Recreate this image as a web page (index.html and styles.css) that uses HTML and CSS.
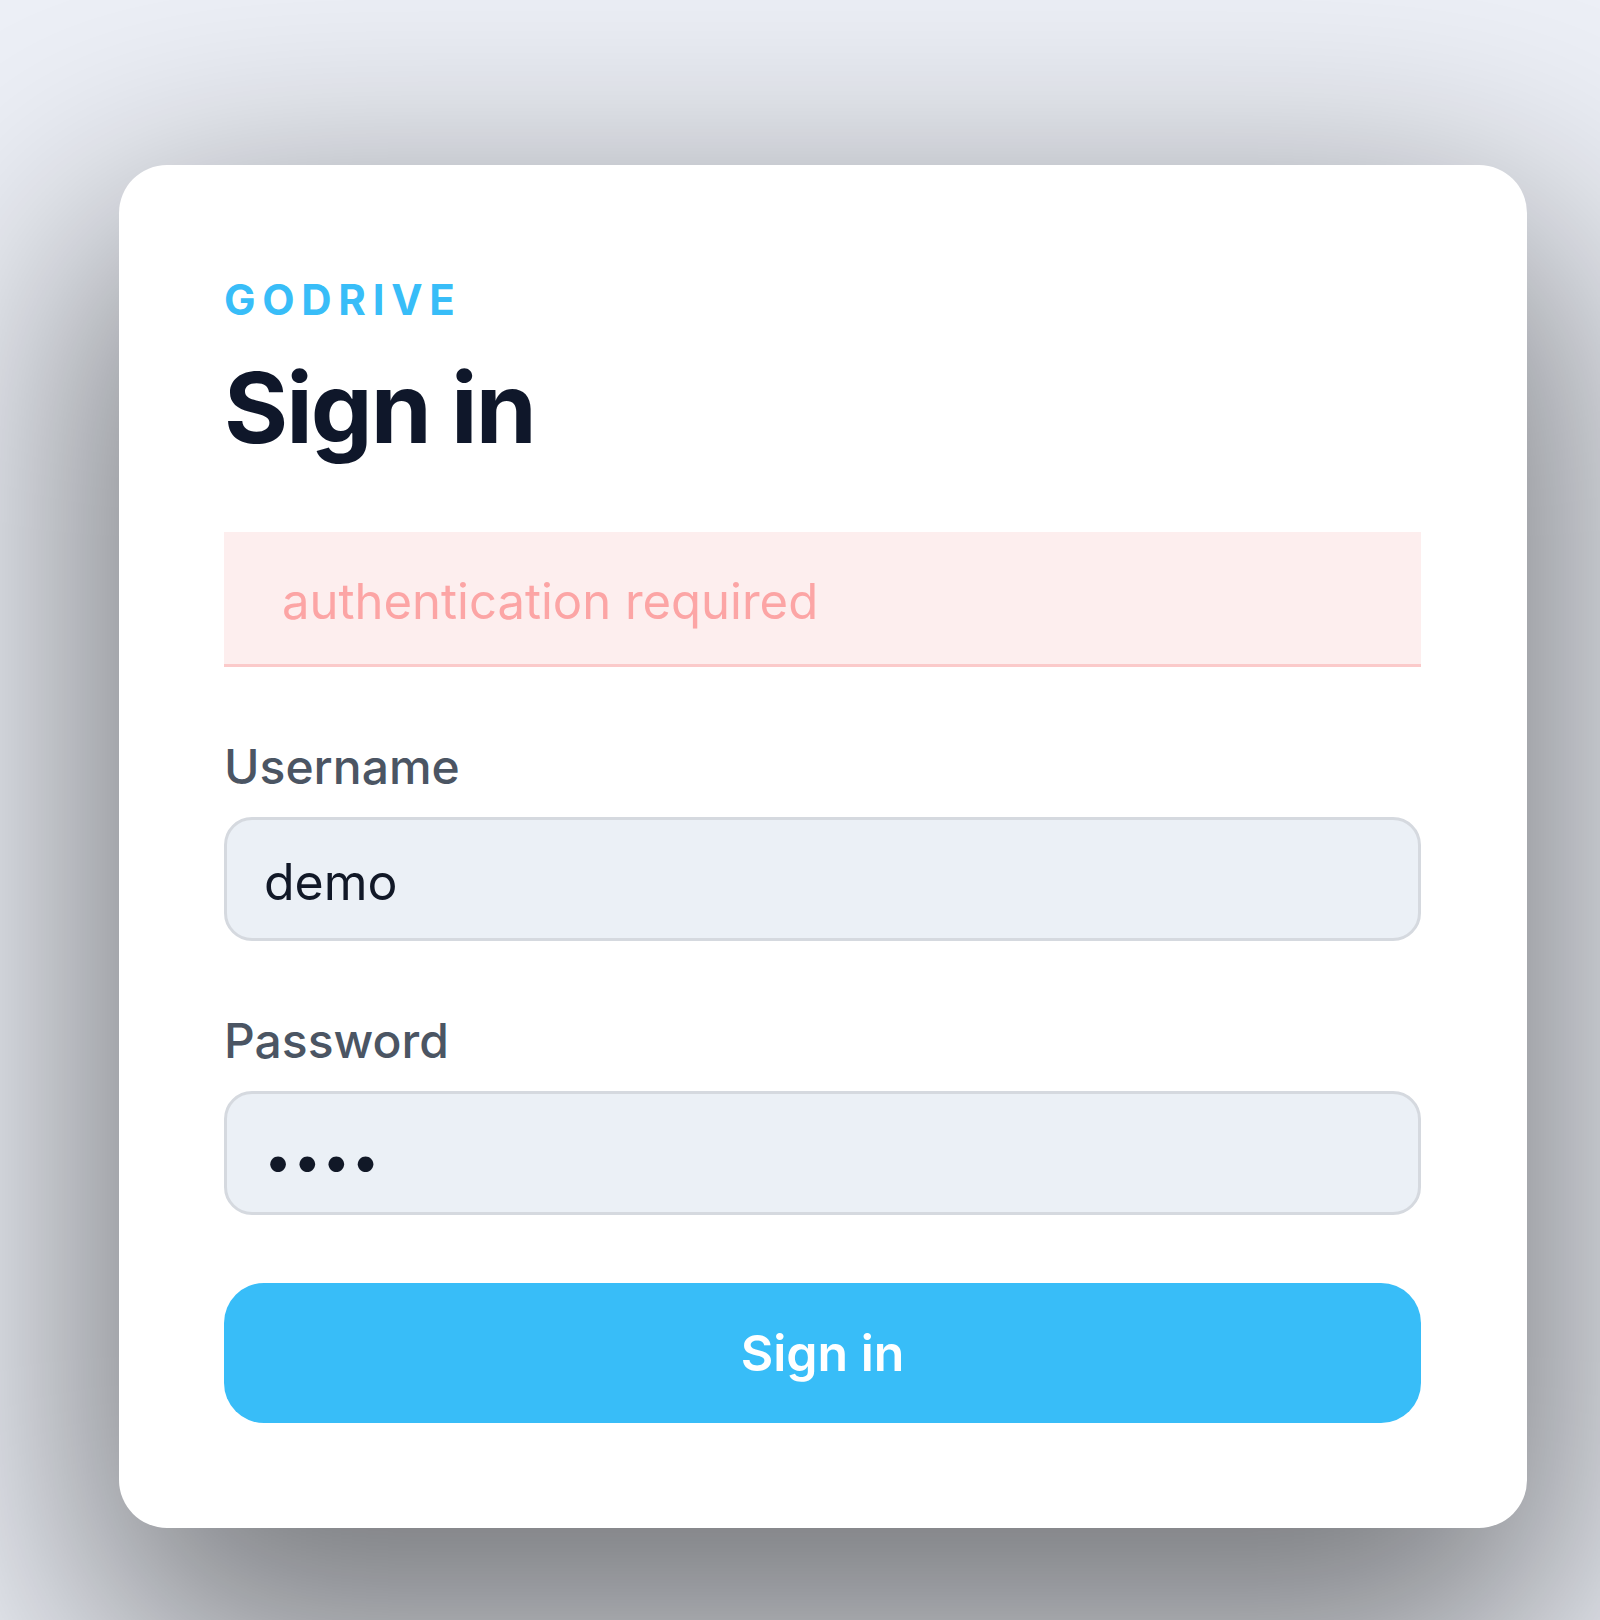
FILE: index.html
```html
<!DOCTYPE html>
<html lang="en">
<head>
  <meta charset="UTF-8" />
  <meta name="viewport" content="width=device-width, initial-scale=1.0"/>
  <title>GoDrive - Sign in</title>
  <link rel="stylesheet" href="styles.css">
</head>
<body>
  <div class="login-card">
    <div class="brand">GODRIVE</div>
    <h1>Sign in</h1>

    <div class="alert">authentication required</div>

    <form class="login-form" onsubmit="return false;">
      <label for="username">Username</label>
      <input id="username" type="text" value="demo">

      <label for="password">Password</label>
      <input id="password" class="secret" type="password" value="demo">

      <button type="submit">Sign in</button>
    </form>
  </div>
</body>
</html>
```

FILE: styles.css
```css
* {
  box-sizing: border-box;
}

body {
  margin: 0;
  min-height: 100vh;
  padding: 165px 73px 0 119px;
  background-color: #edf0f7;
  font-family: "Inter", "Noto Sans", sans-serif;
  overflow: hidden;
}

.login-card {
  background-color: #ffffff;
  border-radius: 48px;
  padding: 112px 106px 105px 105px;
  box-shadow: 0 100px 268px 33px rgba(0, 0, 0, 0.5);
}

.brand {
  font-size: 42px;
  line-height: 46px;
  font-weight: 700;
  letter-spacing: 0.16em;
  color: #38bdf8;
}

.login-card h1 {
  margin: 31px 0 0 0;
  font-size: 98px;
  line-height: 108px;
  font-weight: 700;
  letter-spacing: -0.02em;
  color: #0f172a;
}

.alert {
  margin-top: 70px;
  padding: 42px 58px 34px;
  background-color: #fdeeee;
  border-bottom: 3px solid #fbcaca;
  color: #fca5a5;
  font-size: 49px;
  line-height: 56px;
}

.login-form {
  display: flex;
  flex-direction: column;
}

.login-form label {
  margin-top: 72px;
  font-size: 48px;
  line-height: 56px;
  font-weight: 500;
  color: #4b5563;
}

.login-form input {
  margin-top: 22px;
  height: 124px;
  padding: 5px 37px 0;
  border: 3px solid #d5d9df;
  border-radius: 28px;
  background-color: #ebf0f6;
  font-family: inherit;
  font-size: 50px;
  color: #111827;
  outline: none;
}

.login-form input.secret {
  padding-top: 16px;
  letter-spacing: 0.02em;
}

.login-form button {
  margin-top: 68px;
  height: 140px;
  border: none;
  border-radius: 40px;
  background-color: #38bdf8;
  color: #ffffff;
  font-family: inherit;
  font-size: 50px;
  font-weight: 600;
  cursor: pointer;
}
```
